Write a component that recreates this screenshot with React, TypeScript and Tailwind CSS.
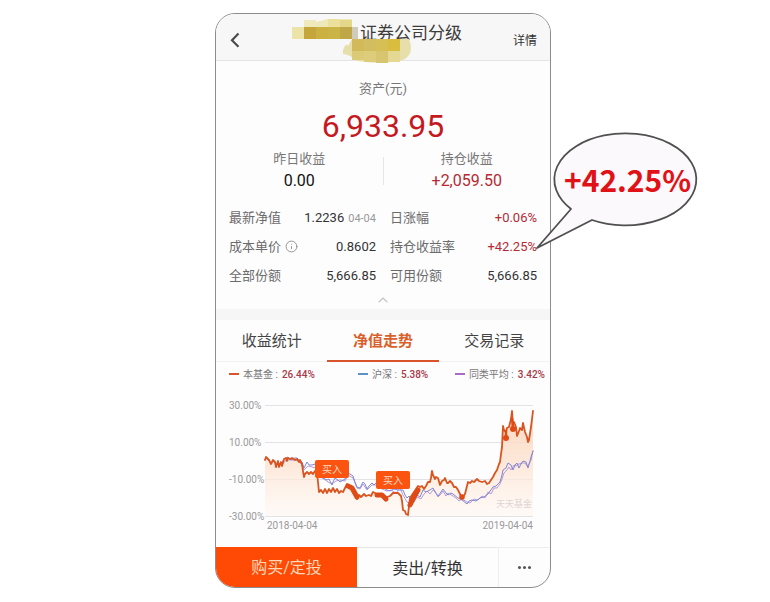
import { ChevronUp, Info } from 'lucide-react'

type Tone = 'dark' | 'red'

const HOLDINGS: { label: string; value: string; date?: string; info?: boolean; tone: Tone }[] = [
  { label: '最新净值', value: '1.2236', date: '04-04', tone: 'dark' },
  { label: '日涨幅', value: '+0.06%', tone: 'red' },
  { label: '成本单价', value: '0.8602', info: true, tone: 'dark' },
  { label: '持仓收益率', value: '+42.25%', tone: 'red' },
  { label: '全部份额', value: '5,666.85', tone: 'dark' },
  { label: '可用份额', value: '5,666.85', tone: 'dark' },
]

const TABS = ['收益统计', '净值走势', '交易记录']

const LEGEND = [
  { name: '本基金', value: '26.44%', color: 'bg-[#d9532b]' },
  { name: '沪深', value: '5.38%', color: 'bg-[#5a93c4]' },
  { name: '同类平均', value: '3.42%', color: 'bg-[#a86cc4]' },
]

const AXIS = [
  { y: 7, label: '30.00%' },
  { y: 44, label: '10.00%' },
  { y: 81, label: '-10.00%' },
  { y: 118, label: '-30.00%' },
]

const FUND_LINE =
  '49,62 50,59 53,62 55,66 57,62 59,64 60,69 62,63 63,69 65,64 66,68 68,61 70,60 71,63 72,60 74,61 76,60 79,62 81,61 83,64 84,62 86,66 87,73 88,79 89,76 91,74 93,76 95,74 97,76 99,73 101,75 102,84 103,94 105,92 107,95 109,91 111,95 113,91 115,94 117,90 119,94 121,91 123,95 125,93 127,94 129,90 131,86 134,88 138,95 141,101 143,97 145,99 148,96 150,98 153,97 155,98 157,94 159,95 162,97 166,98 169,102 171,99 174,98 177,95 182,95 185,98 186,103 187,112 189,113 190,116 192,117 193,108 194,100 198,94 202,88 204,89 206,88 208,91 210,88 212,84 214,84 215,80 216,73 217,77 219,81 220,79 222,80 224,87 226,83 228,82 229,80 231,85 232,85 234,83 236,85 238,89 240,89 242,92 244,96 246,100 249,96 250,92 252,84 254,85 256,83 258,84 261,81 263,83 266,84 269,83 271,86 273,85 275,82 277,79 279,75 281,72 283,66 284,64 285,56 286,49 287,28 288,32 290,34 291,30 293,29 295,21 296,13 297,27 298,24 300,29 301,38 303,33 304,30 306,32 307,25 309,34 311,39 312,44 313,42 315,29 317,13'

const HS_LINE =
  '49,62 50,60 53,63 55,65 58,63 60,67 63,66 66,65 68,61 70,60 72,59 75,62 78,60 81,60 84,63 86,64 88,70 90,66 91,64 93,67 96,67 99,66 101,71 104,77 107,80 111,82 113,81 116,87 117,84 119,80 122,82 124,84 129,81 132,75 134,76 137,78 139,84 141,89 144,90 147,84 149,86 151,91 153,88 156,85 158,87 160,85 166,89 171,92 174,93 178,91 182,92 187,92 189,97 191,100 193,98 196,102 199,98 201,97 204,99 207,92 210,94 214,92 217,90 219,94 222,98 225,94 227,91 230,95 232,97 235,95 237,96 242,100 246,102 251,106 253,103 256,102 260,103 264,100 268,99 272,96 277,89 280,88 284,84 286,77 287,72 290,70 292,65 295,67 297,72 299,67 301,65 303,70 305,66 307,63 310,64 312,70 314,63 315,59 317,53'

const PEER_LINE =
  '66,67 70,62 74,62 78,62 82,63 86,67 88,72 92,68 96,69 100,70 104,79 108,81 112,84 116,86 120,83 124,82 129,83 132,77 137,80 141,90 144,91 147,86 151,92 156,87 160,87 166,91 171,93 175,92 180,95 184,90 187,97 191,104 194,105 196,99 198,104 201,99 205,101 208,96 211,93 214,96 217,92 219,93 222,99 225,96 227,93 230,98 232,95 237,98 240,100 243,103 246,101 251,104 254,105 258,101 262,102 266,98 269,100 272,94 275,96 278,90 281,90 284,86 286,81 288,75 291,72 293,69 295,72 298,67 300,68 303,66 306,65 309,65 311,68 313,66 315,62 317,53'

function Header() {
  return (
    <header className="relative flex h-[47px] items-center border-b border-[#e4e4e4] bg-[#f7f7f7] px-[13px]">
      <button type="button" aria-label="返回" className="mt-1.5 text-[#4c4c4c]">
        <svg width="12" height="18" viewBox="0 0 12 18" fill="none" aria-hidden="true">
          <path d="M9.5 2.5 3 9.2l6.5 6.6" stroke="currentColor" strokeWidth="2.2" />
        </svg>
      </button>
      <h1 className="ml-auto mr-[51px] pb-2 text-[17px] leading-6 text-[#3c3c3c]">证券公司分级</h1>
      <a href="#detail" className="mt-2 text-xs text-[#333]">
        详情
      </a>
      <svg className="absolute left-[75px] top-0.5 h-[48px] w-[122px]" viewBox="0 0 122 48" aria-hidden="true">
        <path d="M13 5 Q20 3 25 6 L37 3 H61 V12 H13 Z" fill="#efe8b8" />
        <path d="M52 34 Q55 26 57 30 L61 23 H118 Q124 38 112 44 Q90 49 66 45 Q58 38 52 38 Z" fill="#e6dfaa" />
        <g shapeRendering="crispEdges">
          <path d="M1 11h12v12H1z" fill="#ece3a8" />
          <path d="M13 11h12v12H13z" fill="#c4a63c" />
          <path d="M25 11h12v12H25z" fill="#cdb042" />
          <path d="M37 11h12v12H37z" fill="#c9b445" />
          <path d="M49 11h12v12H49z" fill="#bfa748" />
          <path d="M13 4h12v7H13z" fill="#f0e9bb" />
          <path d="M37 3h12v8H37z" fill="#ebe19c" />
          <path d="M49 4h12v7H49z" fill="#e4d78a" />
          <path d="M61 11h6v12h-6z" fill="#cfccbd" />
          <path d="M61 23h12v12H61z" fill="#d2b95a" />
          <path d="M73 23h12v12H73z" fill="#d2be60" />
          <path d="M85 23h12v12H85z" fill="#d6bf55" />
          <path d="M97 23h12v12H97z" fill="#d9bd3f" />
          <path d="M61 35h12v9H61z" fill="#dbcb77" />
          <path d="M73 35h12v11H73z" fill="#decc7a" />
          <path d="M85 35h12v12H85z" fill="#d8c570" />
          <path d="M97 35h12v11H97z" fill="#e4d892" />
        </g>
      </svg>
    </header>
  )
}

function Summary() {
  return (
    <section className="pt-[18px] text-center">
      <p className="text-[13px] leading-5 text-[#777]">资产(元)</p>
      <p className="mt-[7px] text-[32px] leading-10 text-[#c41a1f]">6,933.95</p>
      <div className="mt-[3px] flex">
        <div className="flex-1">
          <p className="text-[13px] leading-5 text-[#777]">昨日收益</p>
          <p className="text-base leading-6 text-[#111]">0.00</p>
        </div>
        <div className="mt-2 h-7 w-px bg-[#e6e6ea]" />
        <div className="flex-1">
          <p className="text-[13px] leading-5 text-[#777]">持仓收益</p>
          <p className="text-base leading-6 text-[#b52a33]">+2,059.50</p>
        </div>
      </div>
    </section>
  )
}

function Holdings() {
  return (
    <section className="mt-[10px] px-[13px]">
      <dl className="grid grid-cols-2 gap-x-[14px]">
        {HOLDINGS.map((item) => (
          <div key={item.label} className="flex h-[29px] items-center text-[13px]">
            <dt className="flex items-center gap-1 text-[#6b6b6b]">
              {item.label}
              {item.info && <Info size={13} strokeWidth={1.6} className="text-[#888]" />}
            </dt>
            <dd className={item.tone === 'red' ? 'ml-auto text-[#b52a33]' : 'ml-auto text-[#333]'}>
              {item.value}
              {item.date && <span className="ml-1 text-[11px] text-[#999]">{item.date}</span>}
            </dd>
          </div>
        ))}
      </dl>
      <button type="button" aria-label="收起" className="flex h-[19px] w-full items-center justify-center text-[#c4c4c4]">
        <ChevronUp size={16} strokeWidth={1.6} />
      </button>
    </section>
  )
}

function Tabs() {
  return (
    <nav className="flex h-[42px] border-b border-[#f3f1f3]">
      {TABS.map((tab) => (
        <button
          key={tab}
          type="button"
          className={
            tab === '净值走势'
              ? '-mb-px flex-1 border-b-2 border-[#d9532b] pt-0.5 text-[15px] font-bold text-[#d9602b]'
              : 'flex-1 pt-0.5 text-[15px] text-[#444]'
          }
        >
          {tab}
        </button>
      ))}
    </nav>
  )
}

function Legend() {
  return (
    <ul className="grid h-6 grid-cols-[4fr_3fr_auto] items-center pl-[13px] pr-[5px] text-[10px] text-[#777]">
      {LEGEND.map((item) => (
        <li key={item.name} className="flex items-center">
          <span className={`mr-1 h-0.5 w-[10px] ${item.color}`} />
          {item.name} :<span className="ml-1 font-medium text-[#a83a48]">{item.value}</span>
        </li>
      ))}
    </ul>
  )
}

function BuyTag({ x, y }: { x: number; y: number }) {
  return (
    <g>
      <rect x={x} y={y} width="34" height="18" rx="2" fill="#fb5310" />
      <text x={x + 17} y={y + 13} textAnchor="middle" fontSize="10" fill="#ffd9c4">
        买入
      </text>
    </g>
  )
}

function TrendChart() {
  return (
    <svg className="block h-auto w-full" viewBox="0 -12 334 161" role="img" aria-label="净值走势">
      <defs>
        <linearGradient id="fundFill" x1="0" y1="0" x2="0" y2="1">
          <stop offset="0" stopColor="#fbd3bb" stopOpacity="0.9" />
          <stop offset="0.5" stopColor="#fde3d0" stopOpacity="0.8" />
          <stop offset="1" stopColor="#fff6ef" stopOpacity="0.5" />
        </linearGradient>
      </defs>
      {AXIS.map((tick) => (
        <g key={tick.label}>
          <path d={`M49 ${tick.y + 0.5}H317`} stroke="#e4e2e4" />
          <text x="13" y={tick.y + 4} fontSize="10" fill="#999">
            {tick.label}
          </text>
        </g>
      ))}
      <polygon points={`49,118 ${FUND_LINE} 317,118`} fill="url(#fundFill)" />
      <text x="280" y="109" fontSize="9" fill="#ddd5d1">
        天天基金
      </text>
      <g fill="none" strokeLinejoin="round" strokeLinecap="round">
        <polyline points={PEER_LINE} stroke="#b79bd6" />
        <polyline points={HS_LINE} stroke="#7f86d2" />
        <polyline points={FUND_LINE} stroke="#d9541e" strokeWidth="1.8" />
        <path d="M132 88l4 2 5 9M161 97l5 0 4 4M194 107l4-8 4-7" stroke="#e04a14" strokeWidth="5" />
      </g>
      <g fill="#e04a14">
        <circle cx="246" cy="99" r="2.8" />
        <circle cx="290" cy="40" r="3" />
        <circle cx="297" cy="31" r="3" />
      </g>
      <path d="M290 32V40M296 20L297 31" stroke="#e04a14" strokeWidth="2.4" />
      <BuyTag x={99} y={62} />
      <BuyTag x={160} y={73} />
      <g fontSize="10" fill="#999">
        <text x="51" y="131">
          2018-04-04
        </text>
        <text x="317" y="131" textAnchor="end">
          2019-04-04
        </text>
      </g>
    </svg>
  )
}

function Actions() {
  return (
    <footer className="flex h-10 text-base">
      <button type="button" className="flex-1 bg-[#ff4a05] pt-0.5 text-[#ffd9b8]">
        购买/定投
      </button>
      <button type="button" className="flex-1 border-t border-[#e6e6e6] pt-0.5 text-[#333]">
        卖出/转换
      </button>
      <button
        type="button"
        aria-label="更多"
        className="flex w-[52px] items-center justify-center gap-0.5 border-l border-t border-[#eeeeee]"
      >
        <span className="size-[3px] rounded-full bg-[#555]" />
        <span className="size-[3px] rounded-full bg-[#555]" />
        <span className="size-[3px] rounded-full bg-[#555]" />
      </button>
    </footer>
  )
}

function Callout() {
  return (
    <div className="absolute left-[320px] top-[118px] h-[120px] w-[164px]">
      <svg className="absolute inset-0" viewBox="0 0 164 120" width="164" height="120" aria-hidden="true">
        <path
          d="M36 78 A71 46 0 1 1 57 89 L2 117 Z"
          fill="#fbf9fb"
          stroke="#505050"
          strokeWidth="1.8"
          strokeLinejoin="round"
        />
      </svg>
      <p className="relative pl-[29px] pt-7 font-['Noto_Sans_CJK_SC',sans-serif] text-[30px] font-bold leading-10 text-[#e01218]">
        +42.25%
      </p>
    </div>
  )
}

export default function App() {
  return (
    <main className="min-h-screen bg-white px-4 pb-3 pr-5 pt-[13px] font-['Roboto','Noto_Sans_CJK_SC',sans-serif]">
      <div className="relative mx-auto w-full max-w-[336px]">
        <div className="overflow-hidden rounded-[20px] border border-[#8c8c8c] bg-[#fefdfe]">
          <Header />
          <Summary />
          <Holdings />
          <div className="h-[11px] bg-[#f7f6f7]" />
          <Tabs />
          <Legend />
          <TrendChart />
          <Actions />
        </div>
        <Callout />
      </div>
    </main>
  )
}
